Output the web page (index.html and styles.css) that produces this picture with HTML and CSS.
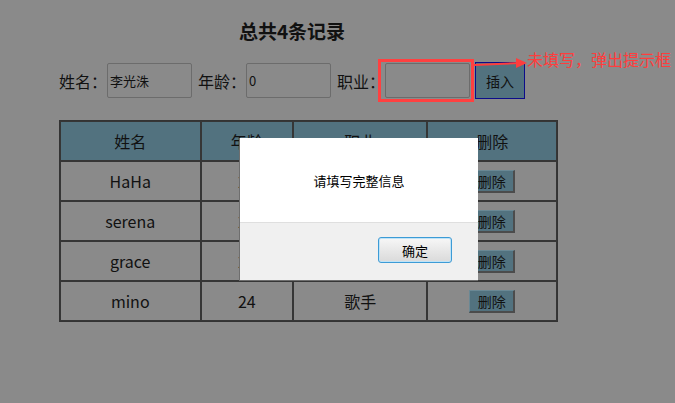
FILE: index.html
```html
<!DOCTYPE html>
<html lang="zh">
<head>
<meta charset="utf-8">
<title>记录</title>
<link rel="stylesheet" href="styles.css">
</head>
<body>
<div class="page">
  <h1 class="title">总共4条记录</h1>
  <div class="form-row">
    <label class="field"><span class="label">姓名：</span><input class="input" value="李光洙"></label>
    <label class="field"><span class="label">年龄：</span><input class="input" value="0"></label>
    <label class="field"><span class="label">职业：</span><input class="input" value=""></label>
    <button class="insert-btn">插入</button>
  </div>
  <table class="records">
    <thead>
      <tr><th class="c1">姓名</th><th class="c2">年龄</th><th class="c3">职业</th><th class="c4">删除</th></tr>
    </thead>
    <tbody>
      <tr><td>HaHa</td><td>22</td><td>学生</td><td><button class="del-btn">删除</button></td></tr>
      <tr><td>serena</td><td>23</td><td>演员</td><td><button class="del-btn">删除</button></td></tr>
      <tr><td>grace</td><td>21</td><td>模特</td><td><button class="del-btn">删除</button></td></tr>
      <tr><td>mino</td><td>24</td><td>歌手</td><td><button class="del-btn">删除</button></td></tr>
    </tbody>
  </table>
</div>

<div class="highlight"></div>
<svg class="arrow" width="60" height="20" viewBox="0 0 60 20">
  <line x1="2" y1="13" x2="48" y2="11" stroke="#ff3d3d" stroke-width="2"/>
  <polygon points="44,6 55,11 44,16" fill="#ff3d3d"/>
</svg>
<div class="note">未填写，弹出提示框</div>

<div class="dialog">
  <div class="dialog-body">请填写完整信息</div>
  <div class="dialog-foot"><button class="ok-btn">确定</button></div>
</div>
</body>
</html>
```

FILE: styles.css
```css
html, body {
  margin: 0;
  padding: 0;
}
body {
  background: #8a8a8a;
  font-family: "Noto Sans CJK SC", "Noto Sans", sans-serif;
  color: #111;
  width: 675px;
  height: 403px;
  overflow: hidden;
  position: relative;
}
.page {
  padding-left: 59px;
}
.title {
  width: 466px;
  margin: 18px 0 0 0;
  font-size: 19px;
  line-height: 26px;
  font-weight: bold;
  text-align: center;
  color: #111;
}
.form-row {
  display: flex;
  align-items: center;
  gap: 6px;
  margin-top: 18px;
  height: 37px;
}
.field {
  display: flex;
  align-items: center;
}
.label {
  font-size: 16px;
  line-height: 20px;
  width: 48px;
  white-space: nowrap;
}
.input {
  box-sizing: border-box;
  width: 85px;
  height: 35px;
  margin: 0;
  border: 1px solid #6c6c6c;
  border-radius: 2px;
  background: #8a8a8a;
  padding: 0 2px;
  font-family: "Noto Sans CJK SC", sans-serif;
  font-size: 13px;
  color: #111;
}
.insert-btn {
  box-sizing: border-box;
  width: 50px;
  height: 37px;
  margin-left: -1px;
  background: #52727f;
  border: 1px solid #0c0c8a;
  font-family: "Noto Sans CJK SC", sans-serif;
  font-size: 14px;
  color: #111;
  padding: 0;
}
.records {
  margin-top: 21px;
  border-collapse: separate;
  border-spacing: 0;
  border: 1px solid #333;
  width: 499px;
}
.records th, .records td {
  border: 1px solid #363636;
  height: 38px;
  padding: 0;
  text-align: center;
  font-size: 16px;
  font-weight: normal;
  color: #111;
}
.records th {
  background: #52727f;
}
.c1 { width: 139px; }
.c2 { width: 91px; }
.c3 { width: 133px; }
.c4 { width: 128px; }
.del-btn {
  box-sizing: border-box;
  width: 46px;
  height: 23px;
  margin-bottom: 2px;
  padding: 0;
  background: #52727f;
  border-top: 1px solid #6a8894;
  border-left: 1px solid #6a8894;
  border-right: 2px solid #4c4c4c;
  border-bottom: 2px solid #4c4c4c;
  font-family: "Noto Sans CJK SC", sans-serif;
  font-size: 14px;
  line-height: 18px;
  color: #111;
}
.highlight {
  position: absolute;
  left: 378px;
  top: 59px;
  width: 90px;
  height: 37px;
  border: 3px solid #ff4040;
}
.arrow {
  position: absolute;
  left: 472px;
  top: 52px;
}
.note {
  position: absolute;
  left: 527px;
  top: 47px;
  font-size: 16px;
  line-height: 24px;
  color: #ff3d3d;
  white-space: nowrap;
}
.dialog {
  position: absolute;
  left: 239px;
  top: 138px;
  width: 239px;
  height: 143px;
  box-sizing: border-box;
  border: 1px solid #6e6e6e;
  border-top: none;
  border-right: none;
  display: flex;
  flex-direction: column;
}
.dialog-body {
  height: 84px;
  background: #fff;
  display: flex;
  align-items: center;
  justify-content: center;
  font-size: 13px;
  color: #000;
}
.dialog-foot {
  flex: 1;
  background: #f0f0f0;
  border-top: 1px solid #dfdfdf;
  display: flex;
  justify-content: flex-end;
  align-items: flex-start;
  padding: 14px 26px 0 0;
}
.ok-btn {
  box-sizing: border-box;
  width: 74px;
  height: 26px;
  border: 1px solid #3c9bd6;
  border-radius: 3px;
  background: linear-gradient(#f7f7f7, #e8e8e8 50%, #dadada);
  box-shadow: inset 0 0 0 1px #bfe3f7;
  font-family: "Noto Sans CJK SC", sans-serif;
  font-size: 13px;
  color: #000;
  padding: 0;
}
```
